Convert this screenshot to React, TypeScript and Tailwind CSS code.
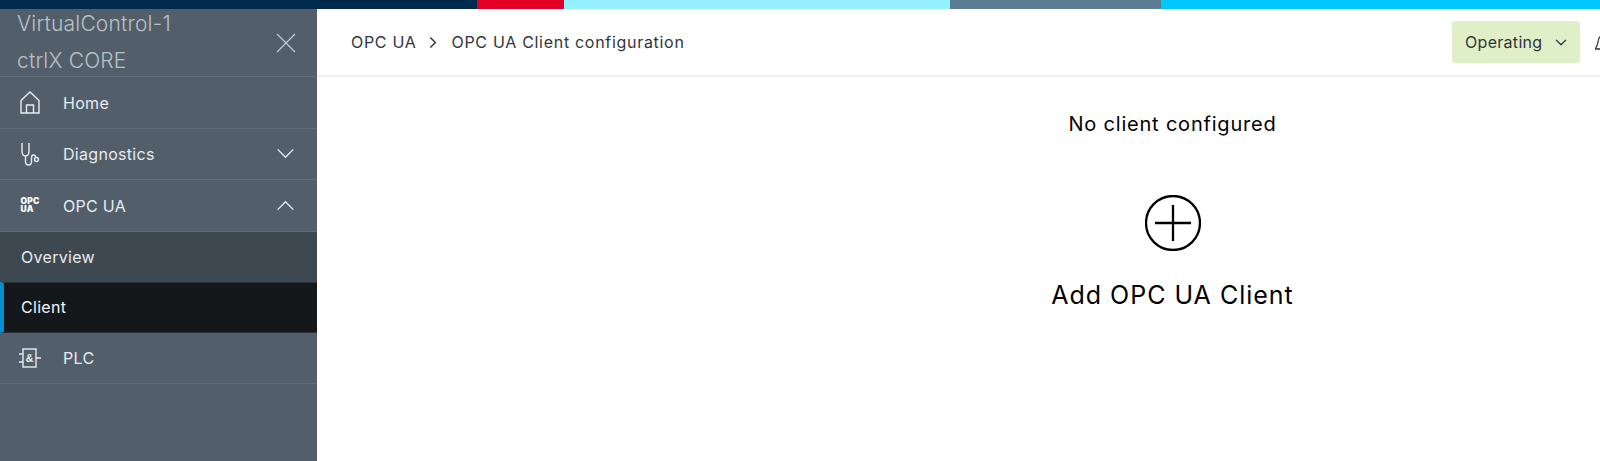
import React from 'react';

const Chevron = ({ up = false, className = '' }: { up?: boolean; className?: string }) => (
  <svg viewBox="0 0 20 12" fill="none" stroke="currentColor" strokeWidth="1.4" className={className}>
    <path vectorEffect="non-scaling-stroke" d={up ? 'M1.5 10.5 10 2l8.5 8.5' : 'M1.5 1.5 10 10l8.5-8.5'} />
  </svg>
);

const HomeIcon = () => (
  <svg viewBox="0 0 20 23" fill="none" stroke="currentColor" strokeWidth="1.4" className="h-[23px] w-5">
    <path d="M1 9.5 10 1l9 8.5V22H1z" />
    <path d="M6.500 22v-8h7v8" />
  </svg>
);

const StethoscopeIcon = () => (
  <svg viewBox="0 0 20 24" fill="none" stroke="currentColor" strokeWidth="1.4" className="h-6 w-5">
    <path d="M2 1v8c0 3 1.500 5 3.500 5S9 12 9 9V1" />
    <path d="M5.500 14v5.500c0 2 1 3.500 3 3.500s3-1.500 3-3.500v-4c0-1.500.8-2.500 2-2.500s2 .8 2 2" />
    <circle cx="16.500" cy="17.500" r="2" />
  </svg>
);

const PlcIcon = () => (
  <svg viewBox="0 0 24 20" fill="none" stroke="currentColor" strokeWidth="1.4" className="h-5 w-6">
    <rect x="5" y="1" width="13" height="18" />
    <path d="M1 6h4M1 14h4M18 10h5" />
    <text x="11.500" y="14" textAnchor="middle" fontSize="11" fontWeight="700" fill="currentColor" stroke="none" fontFamily="'Liberation Sans', sans-serif">&amp;</text>
  </svg>
);

const OpcIcon = () => (
  <div className="w-[18px] text-[8.500px] leading-[8px] font-black tracking-[0.2px] text-white">
    <div>OPC</div>
    <div>UA</div>
  </div>
);

const NavRow = ({
  icon,
  label,
  chevron,
}: {
  icon: React.ReactNode;
  label: string;
  chevron?: 'up' | 'down';
}) => (
  <div className="flex h-[51.500px] items-center border-b border-[#5f6b77] pr-[22px] text-[#e8ebee]">
    <div className="flex w-[63px] shrink-0 justify-center pr-[4px]">{icon}</div>
    <span className="flex-1 pt-[1px] text-base tracking-[0.3px]">{label}</span>
    {chevron && <Chevron up={chevron === 'up'} className="h-[11px] w-[19px]" />}
  </div>
);

export default function App() {
  return (
    <div className="flex h-[461px] w-full flex-col overflow-hidden bg-white font-['Inter',sans-serif]">
      <div className="flex h-[9px] shrink-0">
        <div className="w-[477px] bg-[#002b4c]" />
        <div className="w-[87px] bg-[#e20026]" />
        <div className="w-[386px] bg-[#94f0ff]" />
        <div className="w-[211px] bg-[#5a7c91]" />
        <div className="flex-1 bg-[#00c8ff]" />
      </div>

      <div className="flex min-h-0 flex-1">
        <aside className="w-[317px] shrink-0 bg-[#525f6b]">
          <div className="flex h-[68px] items-center justify-between border-b border-[#5f6b77] pr-[21px] pl-[17px] text-[21px] leading-[37px] font-light tracking-[0.2px] text-[#b9c0c7]">
            <div className="-mt-[2px]">
              <div>VirtualControl-1</div>
              <div>ctrlX CORE</div>
            </div>
            <svg viewBox="0 0 20 20" fill="none" stroke="currentColor" strokeWidth="1.100" className="h-5 w-5 text-[#c9ced3]">
              <path d="M1 1l18 18M19 1 1 19" />
            </svg>
          </div>
          <NavRow icon={<HomeIcon />} label="Home" />
          <NavRow icon={<StethoscopeIcon />} label="Diagnostics" chevron="down" />
          <NavRow icon={<OpcIcon />} label="OPC UA" chevron="up" />
          <div className="flex h-[50px] items-center bg-[#3e4851] pl-[21px] text-base tracking-[0.3px] text-[#e8ebee]">Overview</div>
          <div className="flex h-[51px] items-center border-t border-b border-[#2a3037] border-l-[4px] border-l-[#0090d0] bg-[#14181b] pl-[17px] text-base tracking-[0.3px] text-[#f2f4f5]">
            Client
          </div>
          <NavRow icon={<PlcIcon />} label="PLC" />
        </aside>

        <main className="flex min-w-0 flex-1 flex-col overflow-hidden">
          <header className="flex h-[68px] shrink-0 items-center border-b-2 border-[#eeeeee] pl-[34px] text-[#30363b]">
            <span className="text-base tracking-[0.7px]">OPC UA</span>
            <Chevron className="mr-[11px] ml-[10px] h-[7px] w-[14px] -rotate-90" />
            <span className="flex-1 text-base tracking-[0.7px]">OPC UA Client configuration</span>
            <div className="flex h-[42px] w-[128px] items-center justify-between rounded-[3px] bg-[#dff0c8] pr-[13px] pl-[13px] text-base tracking-[0.3px]">
              Operating
              <Chevron className="h-[7px] w-[12px]" />
            </div>
            <svg viewBox="0 0 20 24" fill="none" stroke="currentColor" strokeWidth="1.300" className="-mr-[15px] ml-[15px] h-6 w-5 shrink-0">
              <path d="M0 19c1.500-1.500 2.500-3 3-7 .5-4 2.500-7 6-7s6 3 6 7c0 4 .5 5.500 2 7z" />
            </svg>
          </header>
          <div className="flex flex-col items-center pt-[33px] pl-[428px] text-black">
            <p className="text-[20px] leading-[28px] tracking-[0.8px]">No client configured</p>
            <button className="mt-[57px] flex flex-col items-center">
              <svg viewBox="0 0 56 56" fill="none" stroke="currentColor" strokeWidth="2.300" className="h-14 w-14">
                <circle cx="28" cy="28" r="27" />
                <path d="M28 10v36M10 28h36" />
              </svg>
              <span className="mt-[28px] text-[25px] leading-[32px] tracking-[1px]">Add OPC UA Client</span>
            </button>
          </div>
        </main>
      </div>
    </div>
  );
}
